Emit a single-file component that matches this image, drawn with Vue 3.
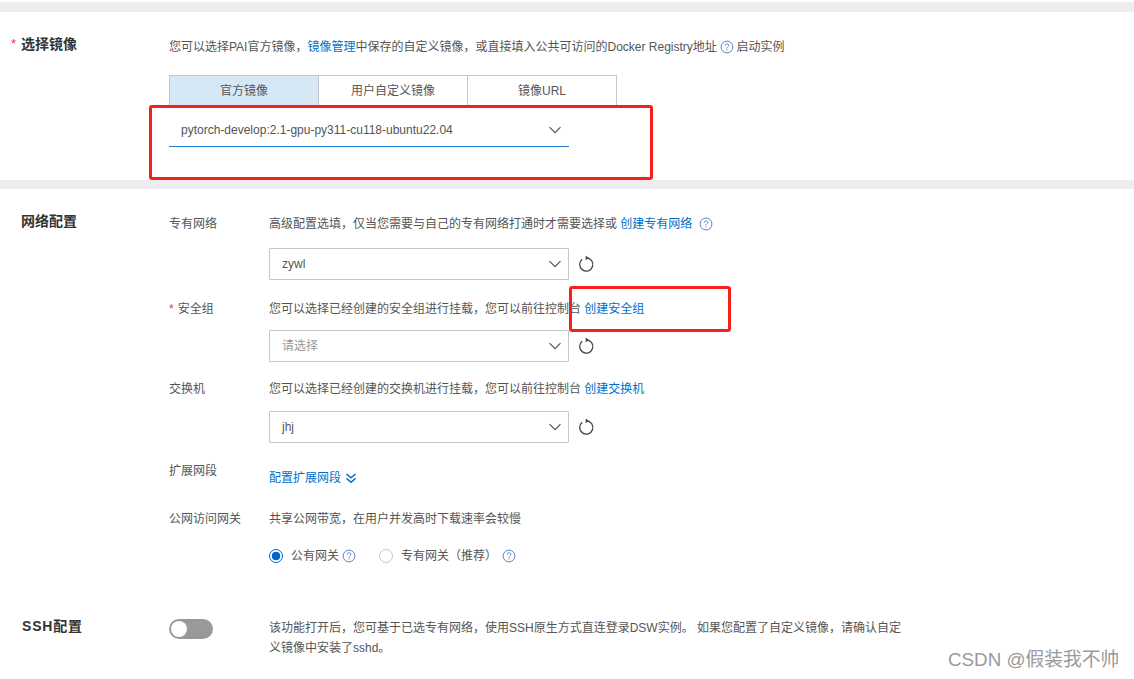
<script setup>
const fields = [
  { label: '专有网络', help: '高级配置选填，仅当您需要与自己的专有网络打通时才需要选择或', link: '创建专有网络', tip: true, value: 'zywl', cls: 'f1' },
  { label: '安全组', req: true, help: '您可以选择已经创建的安全组进行挂载，您可以前往控制台', link: '创建安全组', value: '请选择', placeholder: true, cls: 'f2' },
  { label: '交换机', help: '您可以选择已经创建的交换机进行挂载，您可以前往控制台', link: '创建交换机', value: 'jhj', cls: 'f3' }
]
const tabs = ['官方镜像', '用户自定义镜像', '镜像URL']
</script>

<template>
  <div class="page">
    <div class="band top"></div>

    <section class="image-section">
      <h3 class="title"><span class="star">*</span>选择镜像</h3>
      <div class="content">
        <p class="help">
          您可以选择PAI官方镜像，<a>镜像管理</a>中保存的自定义镜像，或直接填入公共可访问的Docker Registry地址
          <svg class="tip inline" viewBox="0 0 14 14"><circle cx="7" cy="7" r="5.9"/><path d="M5.2 5.6c0-1.1.8-1.8 1.9-1.8s1.8.7 1.8 1.6c0 1.4-1.9 1.5-1.9 3M7 9.4v1.1"/></svg>
          启动实例
        </p>
        <div class="tabs">
          <div v-for="(t, i) in tabs" :key="t" class="tab" :class="{ active: i === 0 }">{{ t }}</div>
        </div>
        <div class="image-select">
          <span>pytorch-develop:2.1-gpu-py311-cu118-ubuntu22.04</span>
          <svg class="chev" viewBox="0 0 14 14"><path d="M1.5 4.2 7 9.7l5.5-5.5"/></svg>
        </div>
      </div>
    </section>

    <div class="band"></div>

    <section class="network-section">
      <h3 class="title">网络配置</h3>
      <div class="content">
        <div v-for="f in fields" :key="f.label" class="field" :class="f.cls">
          <label><span v-if="f.req" class="req">*</span>{{ f.label }}</label>
          <div>
            <p class="help">
              {{ f.help }} <a>{{ f.link }}</a>
              <svg v-if="f.tip" class="tip gap" viewBox="0 0 14 14"><circle cx="7" cy="7" r="5.9"/><path d="M5.2 5.6c0-1.1.8-1.8 1.9-1.8s1.8.7 1.8 1.6c0 1.4-1.9 1.5-1.9 3M7 9.4v1.1"/></svg>
            </p>
            <div class="select-row">
              <div class="select" :class="{ ph: f.placeholder }">
                <span>{{ f.value }}</span>
                <svg class="chev" viewBox="0 0 14 14"><path d="M1.5 4.2 7 9.7l5.5-5.5"/></svg>
              </div>
              <svg class="refresh" viewBox="0 0 18 18"><path d="M5.2 4.3a6.6 6.6 0 1 0 4.2-1.4"/><path class="head" d="M8.7.6 11.8 3 8.7 5.3z"/></svg>
            </div>
          </div>
        </div>

        <div class="field f4">
          <label>扩展网段</label>
          <a class="expand">配置扩展网段
            <svg viewBox="0 0 12 12"><path d="M1.5 2 6 5.8 10.5 2M1.5 6.4 6 10.2l4.5-3.8"/></svg>
          </a>
        </div>

        <div class="field f5">
          <label>公网访问网关</label>
          <div>
            <p class="help">共享公网带宽，在用户并发高时下载速率会较慢</p>
            <div class="radios">
              <span class="radio on"></span>
              <span class="radio-text">公有网关</span>
              <svg class="tip small" viewBox="0 0 14 14"><circle cx="7" cy="7" r="5.9"/><path d="M5.2 5.6c0-1.1.8-1.8 1.9-1.8s1.8.7 1.8 1.6c0 1.4-1.9 1.5-1.9 3M7 9.4v1.1"/></svg>
              <span class="radio second"></span>
              <span class="radio-text">专有网关（推荐）</span>
              <svg class="tip small last" viewBox="0 0 14 14"><circle cx="7" cy="7" r="5.9"/><path d="M5.2 5.6c0-1.1.8-1.8 1.9-1.8s1.8.7 1.8 1.6c0 1.4-1.9 1.5-1.9 3M7 9.4v1.1"/></svg>
            </div>
          </div>
        </div>
      </div>
    </section>

    <section class="ssh-section">
      <h3 class="title ssh">SSH配置</h3>
      <div class="ssh-body">
        <div class="switch"><i></i></div>
        <p class="ssh-text">该功能打开后，您可基于已选专有网络，使用SSH原生方式直连登录DSW实例。 如果您配置了自定义镜像，请确认自定义镜像中安装了sshd。</p>
      </div>
    </section>

    <div class="mark one"></div>
    <div class="mark two"></div>
    <div class="watermark">CSDN @假装我不帅</div>
  </div>
</template>

<style scoped>
.page {
  position: relative;
  height: 679px;
  overflow: hidden;
  background: #fff;
  font-family: "Liberation Sans", "Noto Sans CJK SC", sans-serif;
  font-size: 12px;
  line-height: 20px;
  color: #555;
}
.band { height: 9px; background: #eeeef1; }
.band.top { height: 10px; margin-top: 2px; }
p, h3 { margin: 0; }
a { color: #0070cc; }
.title {
  width: 169px;
  flex: none;
  padding-left: 21px;
  box-sizing: border-box;
  position: relative;
  font-size: 14px;
  font-weight: 700;
  color: #333;
}
.star { position: absolute; left: 11px; top: 0; color: #e4393c; font-weight: 400; font-size: 13px; }
.image-section { display: flex; height: 168px; padding-top: 22px; box-sizing: border-box; }
.image-section .content { padding-top: 3px; }
.help { white-space: nowrap; }
.tip { width: 14px; height: 14px; vertical-align: -3px; fill: none; stroke: #5b84c9; stroke-width: 1; }
.tip.inline { margin: 0 -1px 0 0; }
.tip.gap { margin-left: 7px; }
.tabs { display: flex; width: 448px; margin-top: 18px; height: 30px; box-sizing: border-box; border: 1px solid #c4c6cf; border-bottom: 0; }
.tab { flex: 1; text-align: center; line-height: 31px; border-left: 1px solid #c4c6cf; }
.tab:first-child { border-left: 0; }
.tab.active { background: #d6e8f5; }
.image-select {
  display: flex; align-items: center; justify-content: space-between;
  width: 400px; height: 33px; margin-top: 9px; padding: 0 7px 0 12px; box-sizing: border-box;
  border-bottom: 1px solid #1a7fd4;
}
.chev { width: 14px; height: 14px; fill: none; stroke: #555; stroke-width: 1.2; }

.network-section { display: flex; padding-top: 22px; }
.network-section .content { padding-top: 3px; }
.field { display: flex; }
.field > label { width: 100px; flex: none; }
.req { color: #e4393c; margin-right: 4px; }
.f1 .help { margin-top: 0; }
.f1 .select-row { margin-top: 14px; }
.f2 { margin-top: 19px; }
.f2 .select-row { margin-top: 11px; }
.f3 { margin-top: 17px; }
.f3 .select-row { margin-top: 12px; }
.f4 { margin-top: 18px; height: 27px; }
.f5 { margin-top: 21px; }
.select-row { display: flex; align-items: center; }
.select {
  display: flex; align-items: center; justify-content: space-between;
  width: 300px; height: 32px; padding: 0 6px 0 12px; box-sizing: border-box;
  border: 1px solid #c4c6cf; border-radius: 1px;
}
.select.ph span { color: #999; }
.refresh { width: 18px; height: 18px; margin-left: 8px; fill: none; stroke: #444; stroke-width: 1.3; }
.refresh .head { fill: #444; stroke: none; }
.expand { display: inline-flex; align-items: center; align-self: flex-end; height: 20px; }
.expand svg { width: 12px; height: 12px; margin-left: 4px; fill: none; stroke: #0070cc; stroke-width: 1.5; }
.radios { display: flex; align-items: center; margin-top: 17px; height: 20px; }
.radio { width: 14px; height: 14px; box-sizing: border-box; border: 1px solid #c4c6cf; border-radius: 50%; flex: none; }
.radio.on { border: 1px solid #0064c8; background: radial-gradient(circle, #0064c8 0 4px, #fff 4.6px); }
.radio.second { margin-left: 23px; }
.radio-text { margin-left: 8px; }
.tip.small { margin-left: 3px; }
.tip.last { margin-left: 5px; }

.ssh-section { display: flex; margin-top: 50px; }
.ssh { padding-left: 22px; color: #333; letter-spacing: 0.8px; }
.ssh-body { display: flex; padding-top: 3px; }
.switch { position: relative; width: 44px; height: 20px; border-radius: 10px; background: #999; flex: none; }
.switch i { position: absolute; left: 2px; top: 2px; width: 16px; height: 16px; border-radius: 50%; background: #fff; }
.ssh-text { width: 636px; margin-left: 56px; line-height: 20px; margin-top: -1px; }

.mark { position: absolute; box-sizing: border-box; border: 3px solid #f5201a; border-radius: 3px; }
.mark.one { left: 149px; top: 105px; width: 504px; height: 75px; }
.mark.two { left: 569px; top: 286px; width: 162px; height: 46px; }
.watermark { position: absolute; left: 948px; top: 648px; font-size: 18.8px; line-height: 24px; color: #9a9a9a; white-space: nowrap; }
</style>
